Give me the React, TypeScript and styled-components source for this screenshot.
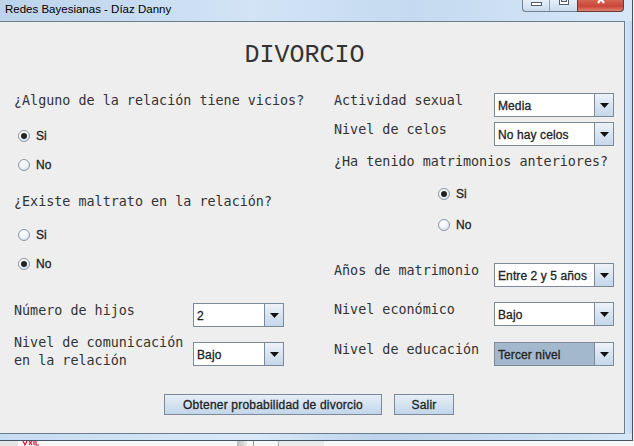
import React from "react";
import styled, { createGlobalStyle } from "styled-components";

const Global = createGlobalStyle`
  html, body { margin: 0; padding: 0; background: #f2f2f2; }
  body { width: 634px; height: 446px; overflow: hidden; }
  * { box-sizing: border-box; }
`;

const Screen = styled.div`
  width: 634px;
  height: 446px;
  display: flex;
  flex-direction: column;
  overflow: hidden;
  background: #f4f4f4;
`;

const Frame = styled.div`
  width: 633px;
  display: flex;
  flex-direction: column;
  background: linear-gradient(90deg, #bcd3ea 0%, #d2e4f6 40%, #c5daf0 65%, #d6e7f8 100%);
  border-right: 1px solid #46535f;
  border-bottom: 1px solid #46535f;
`;

const TitleBar = styled.div`
  height: 21px;
  display: flex;
  align-items: flex-start;
  justify-content: space-between;
  padding-left: 5px;
  padding-right: 8px;
`;

const TitleText = styled.div`
  font: 11.5px/18px "Liberation Sans", Arial, sans-serif;
  color: #000;
`;

const Caption = styled.div`
  display: flex;
  height: 13px;
  margin-top: -1px;
`;

const CapGroup = styled.div`
  display: flex;
  border: 1px solid #6f7f92;
  border-top: none;
  border-right: none;
  border-bottom-left-radius: 4px;
  background: linear-gradient(#e9f1f9, #c9dbee);
  overflow: hidden;
`;

const CapButton = styled.div<{ $w: number; $divider?: boolean }>`
  width: ${(p) => p.$w}px;
  height: 100%;
  display: flex;
  justify-content: center;
  align-items: flex-start;
  border-right: ${(p) => (p.$divider ? "1px solid #8ea0b4" : "none")};
`;

const MinGlyph = styled.div`
  width: 11px;
  height: 4px;
  margin-top: 3px;
  border: 1px solid #4e5b69;
  background: #fff;
`;

const MaxGlyph = styled.div`
  width: 10px;
  height: 7px;
  margin-top: -1px;
  border: 1px solid #4e5b69;
  border-top: none;
  background: #fff;
  display: flex;
  justify-content: center;
  &::after {
    content: "";
    width: 4px;
    height: 3px;
    border: 1px solid #4e5b69;
    border-top: none;
    background: #dfe8f2;
  }
`;

const CloseButton = styled.div`
  width: 47px;
  height: 100%;
  border: 1px solid #6b3a35;
  border-top: none;
  border-bottom-right-radius: 4px;
  background: linear-gradient(#d86a57, #c9463a 60%, #e0836e);
  display: flex;
  justify-content: center;
  align-items: flex-start;
  overflow: hidden;
`;

const Middle = styled.div`
  display: flex;
  height: 413px;
`;

const Content = styled.div`
  width: 625px;
  height: 413px;
  border: 1px solid #6b7c8d;
  border-left: none;
  background: #eeeeee;
  display: flex;
  flex-direction: column;
`;

const Heading = styled.h1`
  margin: 19px 15px 0 0;
  font: normal 25px/30px "Liberation Mono", "Courier New", monospace;
  color: #333;
  text-align: center;
`;

const Columns = styled.div`
  display: grid;
  grid-template-columns: 320px 1fr;
  align-items: start;
  margin-top: 19px;
`;

const Column = styled.div<{ $top?: number }>`
  display: flex;
  flex-direction: column;
  padding-left: 14px;
  padding-top: ${(p) => p.$top ?? 0}px;
`;

const Question = styled.div<{ $mt?: number }>`
  margin-top: ${(p) => p.$mt ?? 0}px;
  font: 13.4px/16px "DejaVu Sans Mono", monospace;
  color: #333;
  white-space: nowrap;
`;

const RadioRow = styled.label<{ $mt?: number; $indent?: number }>`
  display: flex;
  align-items: center;
  gap: 6px;
  height: 16px;
  margin-top: ${(p) => p.$mt ?? 0}px;
  padding-left: ${(p) => 4 + (p.$indent ?? 0)}px;
  font: 12px/16px "Liberation Sans", Arial, sans-serif;
  color: #222;
  -webkit-text-stroke: 0.3px #222;
`;

const RadioCircle = styled.span<{ $on?: boolean }>`
  width: 12px;
  height: 12px;
  border-radius: 50%;
  border: 1px solid #8a98a6;
  background: radial-gradient(circle at 40% 30%, #ffffff 0%, #f1f5f9 45%, #c9d7e6 100%);
  display: flex;
  align-items: center;
  justify-content: center;
  &::after {
    content: "";
    width: 6px;
    height: 6px;
    border-radius: 50%;
    background: ${(p) => (p.$on ? "#222" : "transparent")};
  }
`;

const FieldRow = styled.div<{ $mt?: number }>`
  display: flex;
  align-items: flex-start;
  margin-top: ${(p) => p.$mt ?? 0}px;
`;

const FieldLabel = styled.div<{ $w: number; $lh?: number; $mt?: number }>`
  width: ${(p) => p.$w}px;
  flex: none;
  margin-top: ${(p) => p.$mt ?? 0}px;
  font: 13.4px/${(p) => p.$lh ?? 16}px "DejaVu Sans Mono", monospace;
  color: #333;
  white-space: nowrap;
`;

const Combo = styled.div<{ $w: number; $mt?: number }>`
  width: ${(p) => p.$w}px;
  height: 24px;
  flex: none;
  margin-top: ${(p) => p.$mt ?? 0}px;
  border: 1px solid #7a8a99;
  background: #fff;
  display: flex;
`;

const ComboValue = styled.div<{ $selected?: boolean }>`
  flex: 1;
  display: flex;
  align-items: center;
  padding-left: 2px;
  padding-top: 1px;
  border: 1px solid ${(p) => (p.$selected ? "#a3b8cc" : "#ffffff")};
  background: ${(p) => (p.$selected ? "#a3b8cc" : "#fff")};
  font: 12px "Liberation Sans", Arial, sans-serif;
  letter-spacing: 0.1px;
  color: #222;
  -webkit-text-stroke: 0.3px #222;
  white-space: nowrap;
  overflow: hidden;
`;

const ComboArrow = styled.div`
  width: 19px;
  flex: none;
  border-left: 1px solid #7a8a99;
  background: linear-gradient(#eef3f9, #d6e2ef 55%, #c5d7ea);
  display: flex;
  align-items: center;
  justify-content: center;
`;

const Footer = styled.div`
  display: flex;
  justify-content: center;
  gap: 12px;
  margin-top: 24px;
  padding-right: 6px;
`;

const Button = styled.button<{ $w: number }>`
  width: ${(p) => p.$w}px;
  height: 21px;
  padding: 0;
  border: 1px solid #7a8a99;
  background: linear-gradient(#e6eef7, #d3e1ef 55%, #c3d6ea);
  font: 12px "Liberation Sans", Arial, sans-serif;
  letter-spacing: 0.2px;
  color: #222;
  -webkit-text-stroke: 0.3px #222;
`;

const SideGlass = styled.div`
  flex: 1;
  background: linear-gradient(90deg, #d3e5f7, #c2d8ef);
`;

const BottomGlass = styled.div`
  height: 6px;
  background: linear-gradient(90deg, #c6dcf2, #d9e9f8 40%, #bcd3ec 60%, #d4e6f7);
`;

const Desktop = styled.div`
  flex: 1;
  display: flex;
  align-items: flex-start;
  background: #f7f7f7;
  overflow: hidden;
`;

const DeskBit = styled.div<{ $w: number; $ml: number; $c: string }>`
  width: ${(p) => p.$w}px;
  height: 5px;
  margin-left: ${(p) => p.$ml}px;
  background: ${(p) => p.$c};
`;

const RedMark = styled.svg`
  margin-left: 4px;
  flex: none;
`;

const Arrow = () => (
  <svg width="9" height="5" viewBox="0 0 9 5">
    <path d="M0 0 H9 L4.5 5 Z" fill="#111" />
  </svg>
);

const Select = ({ w, value, mt, selected }: { w: number; value: string; mt?: number; selected?: boolean }) => (
  <Combo $w={w} $mt={mt}>
    <ComboValue $selected={selected}>{value}</ComboValue>
    <ComboArrow>
      <Arrow />
    </ComboArrow>
  </Combo>
);

const Radio = ({ label, on, mt, indent }: { label: string; on?: boolean; mt?: number; indent?: number }) => (
  <RadioRow $mt={mt} $indent={indent}>
    <RadioCircle $on={on} />
    {label}
  </RadioRow>
);

export default function App() {
  return (
    <Screen>
      <Global />
      <Frame>
        <TitleBar>
          <TitleText>Redes Bayesianas - Díaz Danny</TitleText>
          <Caption>
            <CapGroup>
              <CapButton $w={27} $divider>
                <MinGlyph />
              </CapButton>
              <CapButton $w={27}>
                <MaxGlyph />
              </CapButton>
            </CapGroup>
            <CloseButton>
              <svg width="12" height="6" viewBox="0 0 12 6">
                <path d="M1 -4 L7 4 M7 -4 L1 4" transform="translate(2 0)" stroke="#fff" strokeWidth="2.2" fill="none" />
              </svg>
            </CloseButton>
          </Caption>
        </TitleBar>
        <Middle>
          <Content>
            <Heading>DIVORCIO</Heading>
            <Columns>
              <Column $top={3}>
                <Question>¿Alguno de la relación tiene vicios?</Question>
                <Radio label="Si" on mt={19} />
                <Radio label="No" mt={13} />
                <Question $mt={21}>¿Existe maltrato en la relación?</Question>
                <Radio label="Si" mt={17} />
                <Radio label="No" on mt={13} />
                <FieldRow $mt={31}>
                  <FieldLabel $w={179}>Número de hijos</FieldLabel>
                  <Select w={91} value="2" />
                </FieldRow>
                <FieldRow $mt={7}>
                  <FieldLabel $w={179} $lh={18}>
                    Nivel de comunicación
                    <br />
                    en la relación
                  </FieldLabel>
                  <Select w={91} value="Bajo" mt={8} />
                </FieldRow>
              </Column>
              <Column $top={3}>
                <FieldRow>
                  <FieldLabel $w={160}>Actividad sexual</FieldLabel>
                  <Select w={120} value="Media" />
                </FieldRow>
                <FieldRow $mt={5}>
                  <FieldLabel $w={160}>Nivel de celos</FieldLabel>
                  <Select w={120} value="No hay celos" />
                </FieldRow>
                <Question $mt={8}>¿Ha tenido matrimonios anteriores?</Question>
                <Radio label="Si" on mt={16} indent={100} />
                <Radio label="No" mt={15} indent={100} />
                <FieldRow $mt={30}>
                  <FieldLabel $w={160}>Años de matrimonio</FieldLabel>
                  <Select w={120} value="Entre 2 y 5 años" />
                </FieldRow>
                <FieldRow $mt={15}>
                  <FieldLabel $w={160}>Nivel económico</FieldLabel>
                  <Select w={120} value="Bajo" />
                </FieldRow>
                <FieldRow $mt={16}>
                  <FieldLabel $w={160}>Nivel de educación</FieldLabel>
                  <Select w={120} value="Tercer nivel" selected />
                </FieldRow>
              </Column>
            </Columns>
            <Footer>
              <Button $w={218}>Obtener probabilidad de divorcio</Button>
              <Button $w={60}>Salir</Button>
            </Footer>
          </Content>
          <SideGlass />
        </Middle>
        <BottomGlass />
      </Frame>
      <Desktop>
        <DeskBit $w={18} $ml={0} $c="#e4e4e4" />
        <RedMark width="20" height="5" viewBox="0 0 20 5">
          <path d="M1 0 L3 4 L5 0 M7 0 L10 4 M10 0 L7 4 M12 0 V4 M14 0 V4 H17" stroke="#e0103a" strokeWidth="1.2" fill="none" />
        </RedMark>
        <DeskBit $w={10} $ml={195} $c="linear-gradient(90deg,#bdbdbd,#e8e8e8)" />
        <DeskBit $w={1} $ml={6} $c="#9a9a9a" />
        <DeskBit $w={1} $ml={24} $c="#b0b0b0" />
        <DeskBit $w={45} $ml={0} $c="#eaeaea" />
      </Desktop>
    </Screen>
  );
}
